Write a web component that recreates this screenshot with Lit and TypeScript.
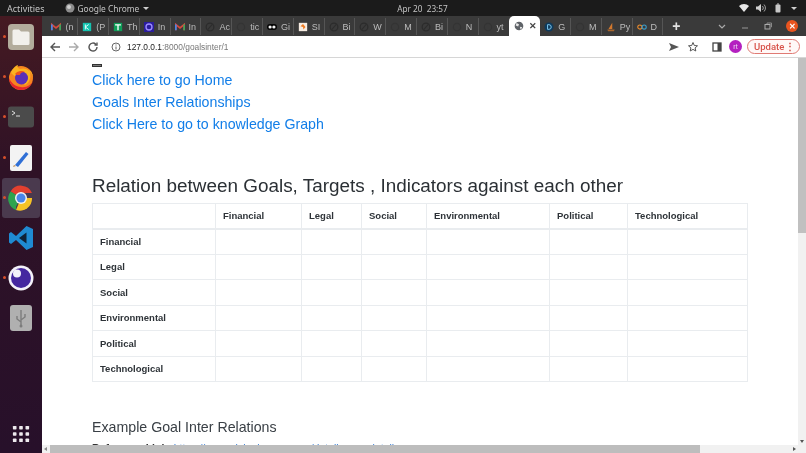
import { LitElement, html, css, svg } from "lit";
import { customElement } from "lit/decorators.js";

type Tab = { icon: string; label: string };
const TABS: Tab[] = [
  { icon: "gmail", label: "(n" }, { icon: "teal", label: "(P" }, { icon: "green", label: "Th" },
  { icon: "ring", label: "In" }, { icon: "gmail", label: "In" }, { icon: "dark", label: "Ac" },
  { icon: "dim", label: "tic" }, { icon: "dots", label: "Gi" }, { icon: "orange", label: "SI" },
  { icon: "dark", label: "Bi" }, { icon: "dark", label: "W" }, { icon: "dim", label: "M" },
  { icon: "dark", label: "Bi" }, { icon: "dim", label: "N" }, { icon: "dim", label: "yt" },
  { icon: "globe", label: "" }, { icon: "d", label: "G" }, { icon: "dim", label: "M" },
  { icon: "ship", label: "Py" }, { icon: "links", label: "D" },
];
const COLS = ["Financial", "Legal", "Social", "Environmental", "Political", "Technological"];

const tabIcon = (k: string) => {
  switch (k) {
    case "gmail": return svg`<svg viewBox="0 0 12 12"><path d="M1 10V3l5 4 5-4v7" fill="none" stroke="#d8483c" stroke-width="2"/><path d="M1 10V3" stroke="#4a86e8" stroke-width="2"/><path d="M11 10V3" stroke="#3fa35a" stroke-width="2"/></svg>`;
    case "teal": return svg`<svg viewBox="0 0 12 12"><rect x="1" y="1" width="10" height="10" fill="#14c3b0"/><path d="M4 3v6M4 6l4-3M4 6l4 3" stroke="#e8fffb" stroke-width="1.2"/></svg>`;
    case "green": return svg`<svg viewBox="0 0 12 12"><rect x="1" y="1" width="10" height="10" fill="#0f9d58"/><path d="M2.5 3.5h7M6 3.5V10" stroke="#fff" stroke-width="1.6"/></svg>`;
    case "ring": return svg`<svg viewBox="0 0 12 12"><rect x="0" y="0" width="12" height="12" fill="#2a1c9c"/><circle cx="6" cy="6" r="3.6" fill="none" stroke="#9d8cff" stroke-width="1.6"/></svg>`;
    case "dark": return svg`<svg viewBox="0 0 12 12"><circle cx="6" cy="6" r="4.6" fill="none" stroke="#2c2c2c" stroke-width="1.5"/><path d="M3.5 9L8.5 3" stroke="#2c2c2c" stroke-width="1.4"/></svg>`;
    case "dim": return svg`<svg viewBox="0 0 12 12"><circle cx="6" cy="6" r="4.4" fill="none" stroke="#343434" stroke-width="1.4"/></svg>`;
    case "dots": return svg`<svg viewBox="0 0 12 12"><rect y="2.5" width="12" height="7" rx="3.5" fill="#050505"/><circle cx="3.7" cy="6" r="1.9" fill="#f4f4f4"/><circle cx="8.3" cy="6" r="1.9" fill="#f4f4f4"/></svg>`;
    case "orange": return svg`<svg viewBox="0 0 12 12"><rect x="1" y="1" width="10" height="10" fill="#f6ece2"/><path d="M3 5l3-2.5L9 6 6.5 9 6 6z" fill="#ee7b22"/></svg>`;
    case "globe": return svg`<svg viewBox="0 0 12 12"><circle cx="6" cy="6" r="5.2" fill="#5f6368"/><path d="M3 2.5l3 1.5-1 2.5-3-1zM7 7l3 .5-2 3z" fill="#e8e8e8"/></svg>`;
    case "d": return svg`<svg viewBox="0 0 12 12"><circle cx="6" cy="6" r="5.4" fill="#0e3a5c"/><path d="M4.3 3.2v5.6h1.6a2.8 2.8 0 000-5.6z" fill="none" stroke="#7ec8ef" stroke-width="1.2"/></svg>`;
    case "ship": return svg`<svg viewBox="0 0 12 12"><path d="M1.5 9h9l-1 2h-7z" fill="#a8652c"/><path d="M3 8.5L7.5 1v7.5z" fill="#d4792e"/></svg>`;
    default: return svg`<svg viewBox="0 0 12 12"><circle cx="3.4" cy="6" r="2.5" fill="none" stroke="#e98a2c" stroke-width="1.3"/><circle cx="8.6" cy="6" r="2.5" fill="none" stroke="#3a9bc8" stroke-width="1.3"/></svg>`;
  }
};

@customElement("app-root")
export class AppRoot extends LitElement {
  static styles = css`
    :host { display: grid; grid-template-columns: 42px 1fr; grid-template-rows: 16px 20px 22px 395px; width: 806px; height: 453px; overflow: hidden; font-family: "Liberation Sans", Arial, sans-serif; background: #fff; filter: blur(0.35px); }
    .top { grid-column: 1 / 3; background: #1b1b1b; color: #c4c4c4; font-size: 9px; display: grid; grid-template-columns: 1fr auto 1fr; align-items: center; padding: 0 9px 0 48px; font-family: "Noto Sans", sans-serif; }
    .top-left { display: flex; align-items: center; gap: 20px; margin-left: -41px; }
    .app { display: flex; align-items: center; gap: 3px; font-size: 8.4px; }
    .app svg { width: 10px; height: 10px; }
    .caret { width: 0; height: 0; border-left: 3px solid transparent; border-right: 3px solid transparent; border-top: 3px solid #cfcfcf; margin-left: 1px; }
    .clock { font-size: 8.2px; }
    .tray { display: flex; justify-content: flex-end; align-items: center; gap: 7px; }
    .tray svg { width: 10px; height: 10px; display: block; }
    .dock { grid-row: 2 / 5; background: linear-gradient(#451a22, #2f1226 35%, #27102a); display: flex; flex-direction: column; align-items: stretch; position: relative; padding-top: 1px; }
    .dock-item { height: 40.2px; display: flex; align-items: center; justify-content: center; position: relative; flex: none; }
    .dock-item svg { width: 26px; height: 26px; display: block; }
    .dock-item.on { background: #4a3a4e; border-radius: 3px; margin: 0 2px; }
    .pip { position: absolute; left: 3px; top: 50%; width: 3px; height: 3px; margin-top: -2px; background: #d9502a; border-radius: 50%; }
    .dock-item.on .pip { left: 1px; }
    .grid-btn { margin-top: auto; height: 38px; display: grid; place-items: center; }
    .grid-btn svg { width: 18px; height: 18px; display: block; }
    .tabs { background: #3a3a3a; display: flex; align-items: flex-end; color: #bcbcbc; font-size: 9px; padding-left: 5.4px; }
    .tab { width: 30.8px; height: 17px; margin-bottom: 1px; flex: none; display: flex; align-items: center; gap: 4px; padding-left: 4px; box-sizing: border-box; border-right: 1px solid #555; overflow: hidden; white-space: nowrap; }
    .tab svg { width: 10px; height: 10px; flex: none; }
    .tab.active { background: #fff; height: 20px; margin-bottom: 0; border-radius: 5px 5px 0 0; border-right: 0; color: #444; gap: 5px; padding-left: 5px; }
    .tab.prev { border-right: 0; }
    .tab-x { font-size: 9px; font-weight: bold; color: #444; }
    .tab-ctl { flex: 1; display: flex; align-items: center; height: 20px; color: #ddd; }
    .plus { margin-left: 9px; font-size: 14px; font-weight: bold; color: #e2e2e2; line-height: 1; }
    .win { margin-left: auto; display: flex; align-items: center; gap: 13px; padding-right: 8px; }
    .win svg { width: 10px; height: 10px; display: block; }
    .win .close { width: 12px; height: 12px; border-radius: 50%; background: #e9541f; display: grid; place-items: center; color: #fff; font-size: 8px; font-weight: bold; }
    .bar { background: #fff; border-bottom: 1px solid #d6d6d6; box-sizing: border-box; display: flex; align-items: center; padding: 0 6px 0 7px; color: #555; }
    .bar svg { width: 12px; height: 12px; display: block; flex: none; }
    .nav { display: flex; gap: 7px; align-items: center; }
    .url { flex: 1; margin-left: 11px; display: flex; align-items: center; gap: 5px; font-size: 8.4px; color: #777; height: 18px; }
    .url b { font-weight: normal; color: #222; }
    .right { display: flex; align-items: center; }
    .right > svg:nth-child(1) { margin-right: 7px; }
    .right > svg:nth-child(2) { margin-right: 12px; }
    .right > svg:nth-child(3) { margin-right: 6px; }
    .avatar { width: 13px; height: 13px; border-radius: 50%; background: #b420c0; color: #eedcf4; font-size: 7px; display: grid; place-items: center; margin-right: 5px; }
    .update { width: 53px; height: 15px; border: 1px solid #e07a74; border-radius: 8px; background: #fff8f7; color: #d8534b; font-family: Roboto, sans-serif; font-size: 9.5px; font-weight: 500; display: flex; align-items: center; justify-content: space-between; padding: 0 4px 0 6px; box-sizing: border-box; }
    .update span { font-weight: bold; color: #d2463e; }
    .view { position: relative; overflow: hidden; background: #fff; }
    .page { padding: 6px 0 0 50px; width: 656px; color: #333a40; }
    .hr { width: 10px; height: 3px; background: #7b7b7b; border: 1px solid #333; box-sizing: border-box; margin-bottom: 2px; }
    .links { display: flex; flex-direction: column; }
    .links a { font-size: 14.2px; line-height: 22px; color: #127ee8; text-decoration: none; }
    h1 { font-size: 18.9px; font-weight: normal; margin: 39px 0 0; line-height: 24px; color: #2b3035; }
    table { border-collapse: collapse; table-layout: fixed; width: 655px; margin-top: 5px; font-size: 9.5px; }
    th { border: 1px solid #e9ecef; padding: 0 7px; text-align: left; font-weight: bold; height: 25.5px; box-sizing: border-box; color: #2e3338; }
    thead th { border-bottom-width: 2px; height: 25px; }
    td { border: 1px solid #e9ecef; }
    h2 { font-size: 14.2px; font-weight: normal; margin: 36px 0 0; line-height: 18px; color: #3a4046; }
    .cut { font-size: 10.5px; line-height: 12px; margin-top: 6px; color: #333; white-space: nowrap; font-weight: bold; }
    .cut a { color: #3a80d8; font-weight: normal; }
    .vs { position: absolute; right: 0; top: 0; bottom: 0; width: 8px; background: #f1f1f1; }
    .vs .thumb { position: absolute; top: 0; left: 0; right: 0; height: 175px; background: #c0c0c0; }
    .vs .arrow { position: absolute; bottom: 10px; left: 2px; border-left: 2px solid transparent; border-right: 2px solid transparent; border-top: 3px solid #555; }
    .hs { position: absolute; left: 0; right: 0; bottom: 0; height: 8px; background: #f1f1f1; }
    .hs .thumb { position: absolute; left: 8px; width: 650px; top: 0; bottom: 0; background: #bdbdbd; }
    .hs .arrow { position: absolute; right: 10px; top: 2px; border-top: 2px solid transparent; border-bottom: 2px solid transparent; border-left: 3px solid #555; }
    .hs .arrow.l { right: auto; left: 2px; border-left: 0; border-right: 3px solid #888; }
  `;

  render() {
    const widths = [123, 86, 60, 65, 123, 78, 120];
    return html`
      <div class="top">
        <div class="top-left">
          <span>Activities</span>
          <span class="app">
            <svg viewBox="0 0 10 10"><circle cx="5" cy="5" r="4.5" fill="#8d8d8d"/><circle cx="4" cy="4" r="2" fill="#cfcfcf"/></svg>
            Google Chrome <i class="caret"></i>
          </span>
        </div>
        <span class="clock">Apr 20&nbsp;&nbsp;23:57</span>
        <div class="tray">
          <svg viewBox="0 0 10 10"><path d="M0 3a7 7 0 0110 0L5 9z" fill="#e8e8e8"/></svg>
          <svg viewBox="0 0 10 10"><path d="M0 3.5h2L5 1v8L2 6.5H0z" fill="#d0d0d0"/><path d="M6.5 3a3 3 0 010 4M8 1.5a5 5 0 010 7" fill="none" stroke="#a0a0a0"/></svg>
          <svg viewBox="0 0 10 10"><rect x="2.5" y="1.5" width="5" height="8" rx="1" fill="#c8c8c8"/><rect x="4" y=".5" width="2" height="1" fill="#c8c8c8"/></svg>
          <i class="caret"></i>
        </div>
      </div>

      <div class="dock">
        <div class="dock-item"><i class="pip"></i>
          <svg viewBox="0 0 26 26"><rect width="26" height="26" rx="4" fill="#b3ac9c"/><path d="M4.5 7a1.5 1.5 0 011.5-1.5h5l2 2h7A1.5 1.5 0 0121.500 9v10.500A1.500 1.500 0 0120 21H6a1.500 1.500 0 01-1.500-1.500z" fill="#f2f0ec"/></svg>
        </div>
        <div class="dock-item"><i class="pip"></i>
          <svg viewBox="0 0 26 26"><circle cx="13" cy="14" r="12" fill="#f6851f"/><path d="M3 9c1-4 5-8 7-8-1 2 0 3 2 4 5-2 11 1 13 8 0-3-2-6-4-7 3 5 1 13-4 15" fill="#fbb321"/><circle cx="13.500" cy="14" r="6.500" fill="#5b2fb8"/><path d="M7 10c2-3 7-4 10-2-3 0-5 1-5 3-2 0-4 0-5-1z" fill="#f2541b"/><path d="M1 14c0 7 6 12 12 12s10-4 12-9c-2 4-7 7-12 6-5 0-10-4-12-9z" fill="#e8262d"/></svg>
        </div>
        <div class="dock-item"><i class="pip"></i>
          <svg viewBox="0 0 26 26"><rect y="2.500" width="26" height="21" rx="3" fill="#4b4b4b"/><path d="M4 7l3 2-3 2" fill="none" stroke="#ddd" stroke-width="1"/><path d="M8 12h4" stroke="#ddd"/></svg>
        </div>
        <div class="dock-item"><i class="pip"></i>
          <svg viewBox="0 0 26 26"><rect x="2" width="22" height="26" rx="2" fill="#f3f3f3"/><path d="M7 20L18 7l2.500 2L10 22z" fill="#2f6fd6"/><path d="M5 22l1-2 2 1z" fill="#c08a4a"/></svg>
        </div>
        <div class="dock-item on"><i class="pip"></i>
          <svg viewBox="0 0 26 26"><path d="M13 13L2.600 6.500A12 12 0 0124 8H13z" fill="#e2402f"/><path d="M13 13l-5 8.500L8 25A12 12 0 012.600 6.500z" fill="#2da44e"/><path d="M13 13h11A12 12 0 018 25z" fill="#f7c325"/><circle cx="13" cy="13" r="6" fill="#f2f2f2"/><circle cx="13" cy="13" r="4.500" fill="#4a86e8"/></svg>
        </div>
        <div class="dock-item">
          <svg viewBox="0 0 26 26"><path d="M18.500 1L25 4v18l-6.500 3L8 15l-5 4-2-1.500V8.500L3 7l5 4z" fill="#1f8ad2"/><path d="M18.500 7.500L11 13l7.500 5.500z" fill="#0f2238"/></svg>
        </div>
        <div class="dock-item"><i class="pip"></i>
          <svg viewBox="0 0 26 26"><circle cx="13" cy="13" r="12.500" fill="#f4f2fa"/><circle cx="13" cy="13" r="10" fill="#4527a0"/><circle cx="9" cy="8.500" r="4" fill="#f4f2fa"/></svg>
        </div>
        <div class="dock-item">
          <svg viewBox="0 0 26 26"><rect x="2" width="22" height="26" rx="3" fill="#b0b0b0"/><path d="M13 5v16M13 17l-4-3v-3M13 15l4-3V9" fill="none" stroke="#7c7c7c" stroke-width="1.400"/><circle cx="13" cy="21" r="1.500" fill="#7c7c7c"/></svg>
        </div>
        <div class="grid-btn">
          <svg viewBox="0 0 20 20" fill="#eeeaee"><rect x="1" y="1" width="4" height="4" rx=".8"/><rect x="8" y="1" width="4" height="4" rx=".8"/><rect x="15" y="1" width="4" height="4" rx=".8"/><rect x="1" y="8" width="4" height="4" rx=".8"/><rect x="8" y="8" width="4" height="4" rx=".8"/><rect x="15" y="8" width="4" height="4" rx=".8"/><rect x="1" y="15" width="4" height="4" rx=".8"/><rect x="8" y="15" width="4" height="4" rx=".8"/><rect x="15" y="15" width="4" height="4" rx=".8"/></svg>
        </div>
      </div>

      <div class="tabs">
        ${TABS.map((t, i) => html`
          <div class="tab ${t.icon === "globe" ? "active" : ""} ${i === 14 ? "prev" : ""}">
            ${tabIcon(t.icon)}
            ${t.icon === "globe" ? html`<span class="tab-x">✕</span>` : html`<span>${t.label}</span>`}
          </div>`)}
        <div class="tab-ctl">
          <span class="plus">+</span>
          <div class="win">
            <svg viewBox="0 0 10 10"><path d="M2 4l3 3 3-3" fill="none" stroke="#aaa" stroke-width="1.200"/></svg>
            <svg viewBox="0 0 10 10"><path d="M2 7h6" stroke="#888" stroke-width="1.200"/></svg>
            <svg viewBox="0 0 10 10"><rect x="2" y="3.500" width="5" height="4.500" fill="none" stroke="#aaa"/><path d="M4 3V2h4.500v4H8" fill="none" stroke="#888"/></svg>
            <span class="close">✕</span>
          </div>
        </div>
      </div>

      <div class="bar">
        <div class="nav">
          <svg viewBox="0 0 12 12"><path d="M11 6H2M6 2L2 6l4 4" fill="none" stroke="#555" stroke-width="1.400"/></svg>
          <svg viewBox="0 0 12 12"><path d="M1 6h9M6 2l4 4-4 4" fill="none" stroke="#aaa" stroke-width="1.400"/></svg>
          <svg viewBox="0 0 12 12"><path d="M10 6a4 4 0 11-1.200-2.800M10 1.500V4H7.500" fill="none" stroke="#555" stroke-width="1.400"/></svg>
        </div>
        <div class="url">
          <svg viewBox="0 0 12 12"><circle cx="6" cy="6" r="4" fill="none" stroke="#666"/><path d="M6 5.500V8.500M6 3.500v1" stroke="#666"/></svg>
          <span><b>127.0.0.1</b>:8000/goalsinter/1</span>
        </div>
        <div class="right">
          <svg viewBox="0 0 12 12"><path d="M1 2l10 4-10 4 2-4z" fill="#555"/></svg>
          <svg viewBox="0 0 12 12"><path d="M6 1.500l1.300 3 3.200.3-2.400 2.100.7 3.100L6 8.400l-2.800 1.600.7-3.100L1.500 4.800l3.200-.3z" fill="none" stroke="#555"/></svg>
          <svg viewBox="0 0 12 12"><rect x="2" y="2" width="8" height="8" fill="none" stroke="#444" stroke-width="1.300"/><rect x="6.500" y="2" width="3.500" height="8" fill="#444"/></svg>
          <span class="avatar">rt</span>
          <span class="update">Update <span>⋮</span></span>
        </div>
      </div>

      <div class="view">
        <div class="page">
          <div class="hr"></div>
          <div class="links">
            <a>Click here to go Home</a>
            <a>Goals Inter Relationships</a>
            <a>Click Here to go to knowledge Graph</a>
          </div>
          <h1>Relation between Goals, Targets , Indicators against each other</h1>
          <table>
            <colgroup>${widths.map((w) => html`<col style="width:${w}px" />`)}</colgroup>
            <thead><tr><th></th>${COLS.map((c) => html`<th>${c}</th>`)}</tr></thead>
            <tbody>${COLS.map((c) => html`<tr><th>${c}</th>${COLS.map(() => html`<td></td>`)}</tr>`)}</tbody>
          </table>
          <h2>Example Goal Inter Relations</h2>
          <div class="cut">Reference Link: <a>https://www.visionbay.com.au/detail-page-details</a></div>
        </div>
        <div class="vs"><div class="thumb"></div><i class="arrow"></i></div>
        <div class="hs"><i class="arrow l"></i><div class="thumb"></div><i class="arrow"></i></div>
      </div>
    `;
  }
}
